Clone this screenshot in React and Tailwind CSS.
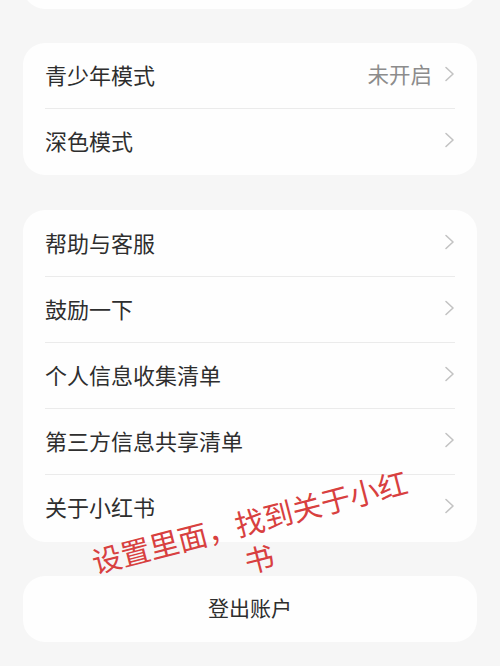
import React from 'react';

const font = { fontFamily: '"Noto Sans CJK SC", "Noto Sans", sans-serif' };

function Chevron() {
    return (
        <svg width="11" height="16" viewBox="0 0 11 16" fill="none" className="shrink-0">
            <polyline points="2,1.5 9,8 2,14.5" stroke="#c3c3c3" strokeWidth="1.6" strokeLinecap="round" strokeLinejoin="round" />
        </svg>
    );
}

function Row({ label, value, last }) {
    return (
        <div className={`h-[66px] pb-[4px] flex items-center justify-between ${last ? '' : 'border-b border-[#ebebeb]'}`}>
            <span className="text-[22px] text-[#2e2e2e] leading-none">{label}</span>
            <div className="flex items-center gap-[12px]">
                {value && <span className="text-[21.5px] text-[#8c8c8c] leading-none">{value}</span>}
                <Chevron />
            </div>
        </div>
    );
}

export default function App() {
    // 两组设置项
    const group1 = [
        { label: '青少年模式', value: '未开启' },
        { label: '深色模式' },
    ];
    const group2 = [
        { label: '帮助与客服' },
        { label: '鼓励一下' },
        { label: '个人信息收集清单' },
        { label: '第三方信息共享清单' },
        { label: '关于小红书' },
    ];

    return (
        <div className="relative w-[500px] h-[666px] overflow-hidden bg-[#f6f6f6] px-[23px]" style={font}>
            <div className="h-[60px] -mt-[51px] rounded-[22px] bg-[#fefefe]" />

            <div className="mt-[34px] rounded-[22px] bg-[#fefefe] px-[22px]">
                {group1.map((r, i) => (
                    <Row key={r.label} {...r} last={i === group1.length - 1} />
                ))}
            </div>

            <div className="mt-[35px] rounded-[22px] bg-[#fefefe] px-[22px] py-px">
                {group2.map((r, i) => (
                    <Row key={r.label} {...r} last={i === group2.length - 1} />
                ))}
            </div>

            <div className="mt-[34px] h-[66px] pb-[3px] rounded-[22px] bg-[#fefefe] flex items-center justify-center">
                <span className="text-[21px] text-[#2e2e2e] leading-none">登出账户</span>
            </div>

            {/* 红色批注 */}
            <div className="absolute left-[254px] top-[539px] -translate-x-1/2 -translate-y-1/2 -rotate-[14.5deg] text-center whitespace-nowrap text-[29.5px] leading-[38px] text-[#d8403f]">
                设置里面，找到关于小红<br />书
            </div>
        </div>
    );
}
